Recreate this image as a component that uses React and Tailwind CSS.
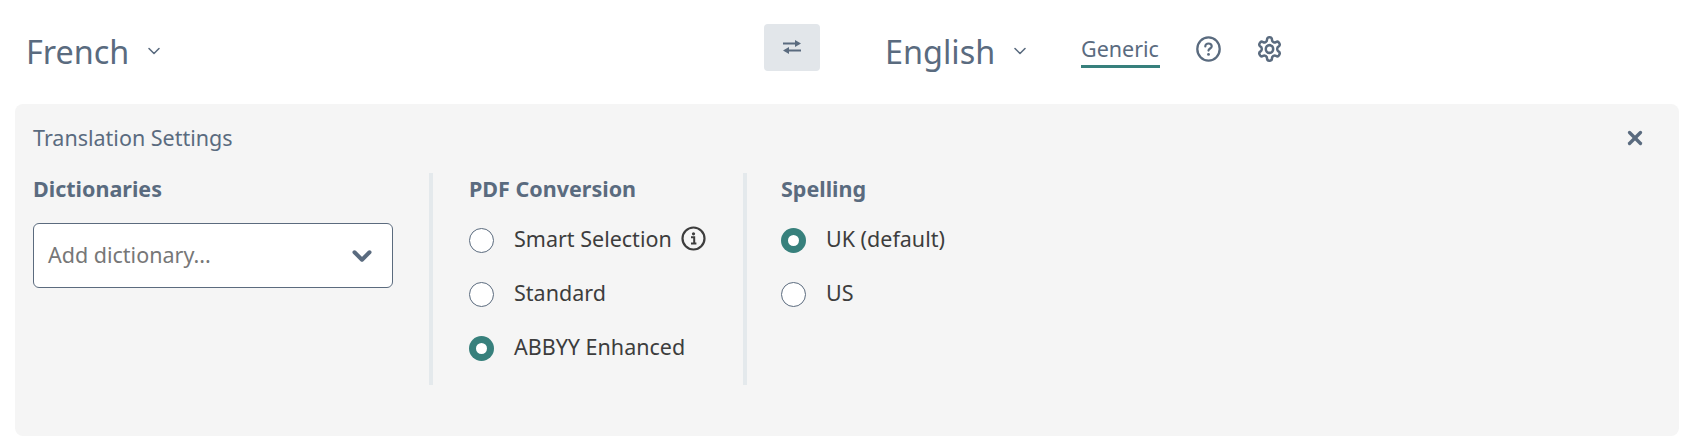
import { ChevronDown, X } from "lucide-react";

function Radio({ label, checked, children }) {
  return (
    <div className="flex h-[54px] items-center">
      {checked ? (
        <span className="flex h-[25px] w-[25px] items-center justify-center rounded-full bg-[#37807c]">
          <span className="h-[11px] w-[11px] rounded-full bg-white" />
        </span>
      ) : (
        <span className="h-[25px] w-[25px] rounded-full border border-[#5b6b7e] bg-white" />
      )}
      <span className="ml-[20px] -mt-[2px] text-[21.5px] text-[#3d3d3d]">{label}</span>
      {children}
    </div>
  );
}

function LangSelect({ name, className }) {
  return (
    <div className={`flex items-center ${className}`}>
      <span className="text-[32.4px] leading-none text-[#5a6b7f]">{name}</span>
      <ChevronDown size={20} strokeWidth={1.9} className="ml-[15px] text-[#5a6b7f]" />
    </div>
  );
}

function SwapIcon() {
  return (
    <svg width="18" height="14" viewBox="0 0 18 14" fill="none" className="-mt-[1px] text-[#5a6b7f]">
      <path d="M0 3.5h13" stroke="currentColor" strokeWidth="2" />
      <path d="M12 0 18 3.5 12 7z" fill="currentColor" />
      <path d="M18 10.5H5" stroke="currentColor" strokeWidth="2" />
      <path d="M6 7 0 10.5 6 14z" fill="currentColor" />
    </svg>
  );
}

function InfoIcon() {
  return (
    <svg width="25" height="25" viewBox="0 0 25 25" fill="none" className="ml-[9px] -mt-[3px] text-[#3d3d3d]">
      <circle cx="12.5" cy="12.5" r="11" stroke="currentColor" strokeWidth="2.2" />
      <circle cx="12.5" cy="7.8" r="1.6" fill="currentColor" />
      <path d="M10 11.3h3.2v6M10 17.6h5.4" stroke="currentColor" strokeWidth="2" />
    </svg>
  );
}

function HelpIcon() {
  return (
    <svg width="25" height="26" viewBox="0 0 25 26" fill="none" className="text-[#5a6b7f]">
      <ellipse cx="12.5" cy="13" rx="11.2" ry="11.6" stroke="currentColor" strokeWidth="2.3" />
      <path d="M9.3 10.4c0-1.8 1.4-2.9 3.2-2.9s3.2 1.1 3.2 2.7c0 2.3-3.2 2.3-3.2 4.4" stroke="currentColor" strokeWidth="2.2" strokeLinecap="round" />
      <circle cx="12.5" cy="18.4" r="1.4" fill="currentColor" />
    </svg>
  );
}

function GearIcon() {
  return (
    <svg width="27" height="28" viewBox="0 0 24 24" fill="none" stroke="currentColor" strokeWidth="2.2" strokeLinecap="round" strokeLinejoin="round" preserveAspectRatio="none" className="text-[#5a6b7f]">
      <path d="M12.22 2h-.44a2 2 0 0 0-2 2v.18a2 2 0 0 1-1 1.73l-.43.25a2 2 0 0 1-2 0l-.15-.08a2 2 0 0 0-2.73.73l-.22.38a2 2 0 0 0 .73 2.73l.15.1a2 2 0 0 1 1 1.72v.51a2 2 0 0 1-1 1.74l-.15.09a2 2 0 0 0-.73 2.73l.22.38a2 2 0 0 0 2.73.73l.15-.08a2 2 0 0 1 2 0l.43.25a2 2 0 0 1 1 1.73V20a2 2 0 0 0 2 2h.44a2 2 0 0 0 2-2v-.18a2 2 0 0 1 1-1.73l.43-.25a2 2 0 0 1 2 0l.15.08a2 2 0 0 0 2.73-.73l.22-.39a2 2 0 0 0-.73-2.73l-.15-.08a2 2 0 0 1-1-1.74v-.5a2 2 0 0 1 1-1.74l.15-.09a2 2 0 0 0 .73-2.73l-.22-.38a2 2 0 0 0-2.73-.73l-.15.08a2 2 0 0 1-2 0l-.43-.25a2 2 0 0 1-1-1.73V4a2 2 0 0 0-2-2z" />
      <circle cx="12" cy="12" r="3.3" />
    </svg>
  );
}

export default function App() {
  return (
    <div className="h-[448px] w-[1694px] bg-white font-['Noto_Sans',sans-serif]">
      <div className="flex h-[104px] items-start">
        <LangSelect name="French" className="ml-[26px] mt-[35px] w-[738px]" />
        <button className="mt-[24px] flex h-[47px] w-[56px] items-center justify-center rounded-[4px] bg-[#e2e6ea]">
          <SwapIcon />
        </button>
        <LangSelect name="English" className="ml-[65px] mt-[35px] w-[196px]" />
        <div className="mt-[36px] h-[32px] w-[79px] border-b-[3px] border-[#37807c] text-[21.5px] leading-[26px] text-[#5a6b7f]">
          Generic
        </div>
        <div className="ml-[36px] mt-[36px]">
          <HelpIcon />
        </div>
        <div className="ml-[35px] mt-[35px]">
          <GearIcon />
        </div>
      </div>

      <div className="mx-[15px] h-[332px] w-[1664px] rounded-[8px] bg-[#f5f5f5] px-[18px] pt-[21px]">
        <div className="flex items-center justify-between pr-[15px]">
          <div className="text-[21.5px] leading-[26px] text-[#5a6b7f]">Translation Settings</div>
          <X size={22} strokeWidth={3.6} className="text-[#5a6b7f]" />
        </div>

        <div className="mt-[22px] flex h-[212px]">
          <div className="w-[396px]">
            <div className="mt-[2px] text-[21.5px] font-bold leading-[28px] text-[#5a6b7f]">Dictionaries</div>
            <div className="mt-[20px] flex h-[65px] w-[360px] items-center justify-between rounded-[6px] border border-[#5b6b7e] bg-white pl-[14px] pr-[15px]">
              <span className="text-[21.5px] text-[#777777]">Add dictionary...</span>
              <ChevronDown size={30} strokeWidth={3.2} className="text-[#5a6b7f]" />
            </div>
          </div>

          <div className="w-[314px] border-l-4 border-[#e4e9ec] pl-[36px]">
            <div className="mt-[2px] text-[21.5px] font-bold leading-[28px] text-[#5a6b7f]">PDF Conversion</div>
            <div className="mt-[10px]">
              <Radio label="Smart Selection">
                <InfoIcon />
              </Radio>
              <Radio label="Standard" />
              <Radio label="ABBYY Enhanced" checked />
            </div>
          </div>

          <div className="border-l-4 border-[#e4e9ec] pl-[34px]">
            <div className="mt-[2px] text-[21.5px] font-bold leading-[28px] text-[#5a6b7f]">Spelling</div>
            <div className="mt-[10px]">
              <Radio label="UK (default)" checked />
              <Radio label="US" />
            </div>
          </div>
        </div>
      </div>
    </div>
  );
}
